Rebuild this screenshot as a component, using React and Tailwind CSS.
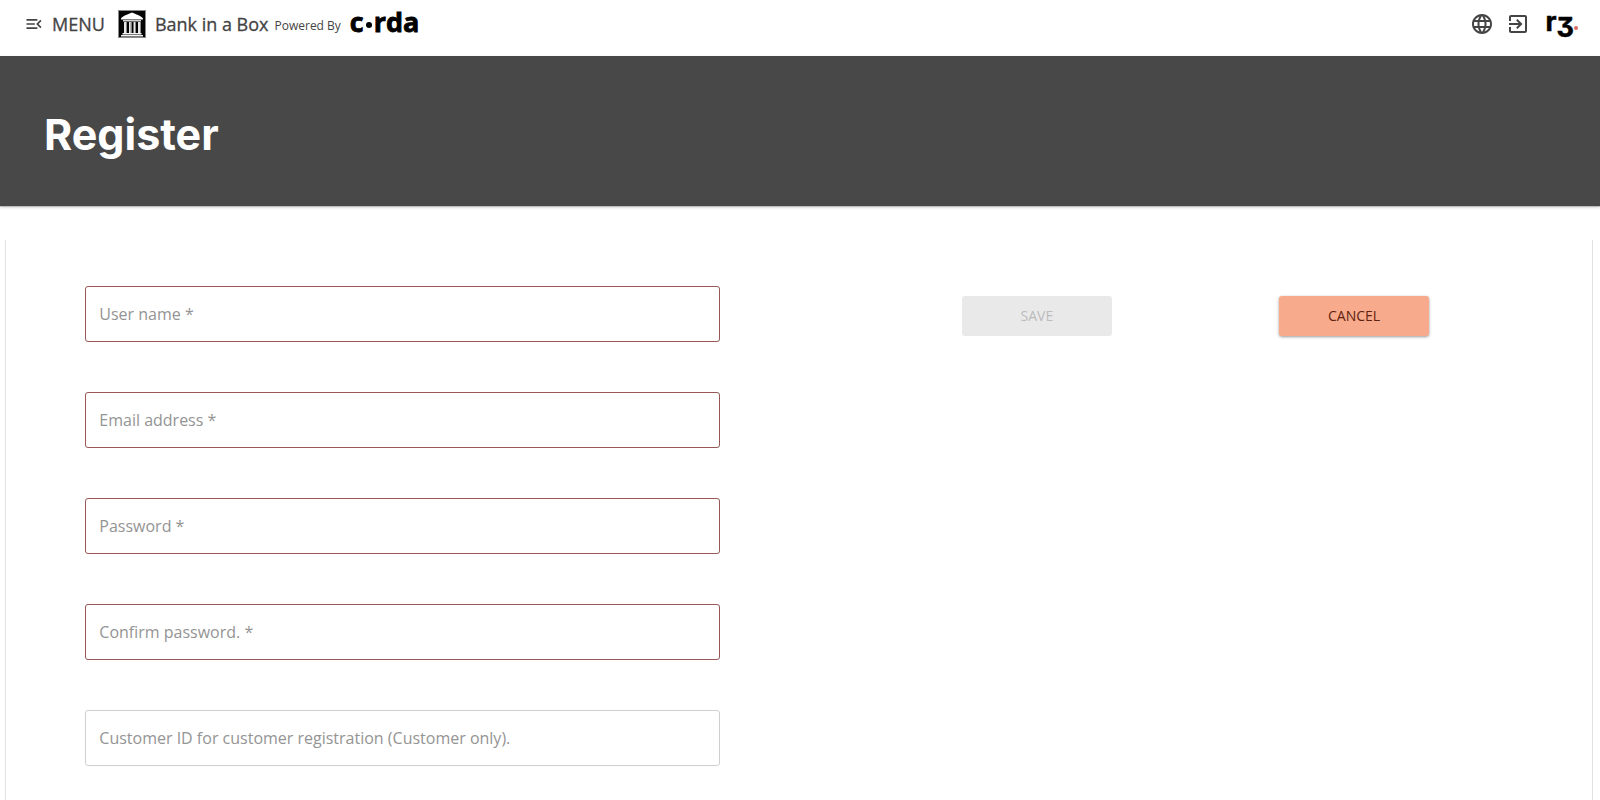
import { useState } from 'react'
import { MdMenuOpen, MdLanguage, MdExitToApp } from 'react-icons/md'

const FIELDS = [
  { id: 'username', label: 'User name', type: 'text', required: true },
  { id: 'email', label: 'Email address', type: 'email', required: true },
  { id: 'password', label: 'Password', type: 'password', required: true },
  { id: 'confirm', label: 'Confirm password.', type: 'password', required: true },
  { id: 'customerId', label: 'Customer ID for customer registration (Customer only).', type: 'text', required: false },
]

function BankLogo() {
  return (
    <svg viewBox="0 0 28 28" className="h-7 w-7" aria-hidden="true">
      <rect width="28" height="28" fill="#8a8a8a" />
      <rect x="1" y="1" width="26" height="26" fill="#050505" />
      <path d="M3 8.5C5 5.5 9 5 14 2.5C19 5 23 5.5 25 8.5V9.5H3Z" fill="#fff" />
      <path d="M5 10h18v1.5H5z" fill="#d5d5d5" />
      <path d="M6 12h3v11H6zM11 12h2.5v11H11zM15.5 12H18v11h-2.5zM20 12h3v11h-3z" fill="#e8e8e8" />
      <path d="M8 12h1v11H8zM12.5 12h1v11h-1zM17 12h1v11h-1zM22 12h1v11h-1z" fill="#8a8a8a" />
      <path d="M4.5 23h19v1.5h-19zM3 25h22v1.5H3z" fill="#f4f4f4" />
    </svg>
  )
}

function CordaLogo() {
  return (
    <span className="flex items-center pb-1 font-['Open_Sans'] text-[27px] leading-7 font-bold text-black [-webkit-text-stroke:0.8px]">
      c
      <span className="mx-0.5 mt-1.5 h-1.5 w-1.5 rounded-full bg-black" />
      rda
    </span>
  )
}

function R3Logo() {
  return (
    <span className="flex items-center font-['Inter'] text-[27px] leading-7 font-bold text-black">
      <span className="pb-1 [-webkit-text-stroke:0.5px]">r</span>
      <span className="pt-2 [font-feature-settings:'cv09'] [-webkit-text-stroke:0.5px]">3</span>
      <span className="mt-2 h-1 w-1 rounded-full bg-[#dd6a62]" />
    </span>
  )
}

function Header() {
  return (
    <header className="flex h-14 items-center justify-between bg-white pr-[22px] pb-2 pl-6 text-[#444]">
      <div className="flex items-center">
        <button type="button" className="flex items-center gap-2 text-lg">
          <MdMenuOpen className="h-5 w-5" />
          <span className="[-webkit-text-stroke:0.3px]">MENU</span>
        </button>
        <a href="#home" className="ml-[13px] flex items-center gap-[9px]">
          <BankLogo />
          <span className="text-lg [-webkit-text-stroke:0.3px]">Bank in a Box</span>
        </a>
        <span className="ml-1.5 pt-1 text-xs">Powered By</span>
        <a href="#corda" className="ml-[9px]">
          <CordaLogo />
        </a>
      </div>
      <div className="flex items-center gap-3">
        <button type="button" aria-label="Language">
          <MdLanguage className="h-6 w-6" />
        </button>
        <button type="button" aria-label="Log in">
          <MdExitToApp className="h-6 w-6" />
        </button>
        <a href="#r3" className="ml-1">
          <R3Logo />
        </a>
      </div>
    </header>
  )
}

function Field({ field, value, onChange }) {
  const border = field.required ? 'border-[#985656]' : 'border-[#cfcfcf]'
  return (
    <div className="relative">
      <input
        id={field.id}
        type={field.type}
        required={field.required}
        value={value}
        onChange={(e) => onChange(field.id, e.target.value)}
        className={`block h-14 w-full rounded-[3px] border bg-white px-3.5 text-base text-[#444] outline-none ${border}`}
      />
      {!value && (
        <label
          htmlFor={field.id}
          className="pointer-events-none absolute inset-y-0 left-3.5 flex items-center text-base text-[#949494]"
        >
          {field.label}
          {field.required && '\u00a0*'}
        </label>
      )}
    </div>
  )
}

export default function App() {
  const [values, setValues] = useState({})

  const handleChange = (id, value) => setValues((prev) => ({ ...prev, [id]: value }))
  const complete = FIELDS.every((f) => !f.required || values[f.id])

  return (
    <div className="flex min-h-screen flex-col bg-white font-['Open_Sans',sans-serif]">
      <Header />
      <div className="flex h-[151px] items-center border-b border-[#bdbdbd] bg-[#484848] px-11 pt-1.5 shadow-sm">
        <h1 className="font-['Inter'] text-[43px] leading-none font-bold text-white">Register</h1>
      </div>
      <form
        onSubmit={(e) => e.preventDefault()}
        className="mt-[33px] mr-[7px] ml-[5px] grow border-x border-[#e2e2e2]"
      >
        <div className="grid grid-cols-[8fr_2fr_4fr_4fr] items-start px-[5%] pt-[46px]">
          <div className="flex flex-col gap-[50px]">
            {FIELDS.map((f) => (
              <Field key={f.id} field={f} value={values[f.id] || ''} onChange={handleChange} />
            ))}
          </div>
          <button
            type="submit"
            disabled={!complete}
            className="col-start-3 mt-2.5 h-10 w-[150px] justify-self-center rounded-[3px] bg-[#f7aa8c] text-sm text-[#5e2410] disabled:bg-[#e9e9e9] disabled:text-[#bcbcbc]"
          >
            SAVE
          </button>
          <button
            type="button"
            onClick={() => setValues({})}
            className="mt-2.5 h-10 w-[150px] justify-self-center rounded-[3px] bg-[#f7aa8c] text-sm text-[#5e2410] shadow-[0_1px_3px_rgba(0,0,0,0.4)]"
          >
            CANCEL
          </button>
        </div>
      </form>
    </div>
  )
}
